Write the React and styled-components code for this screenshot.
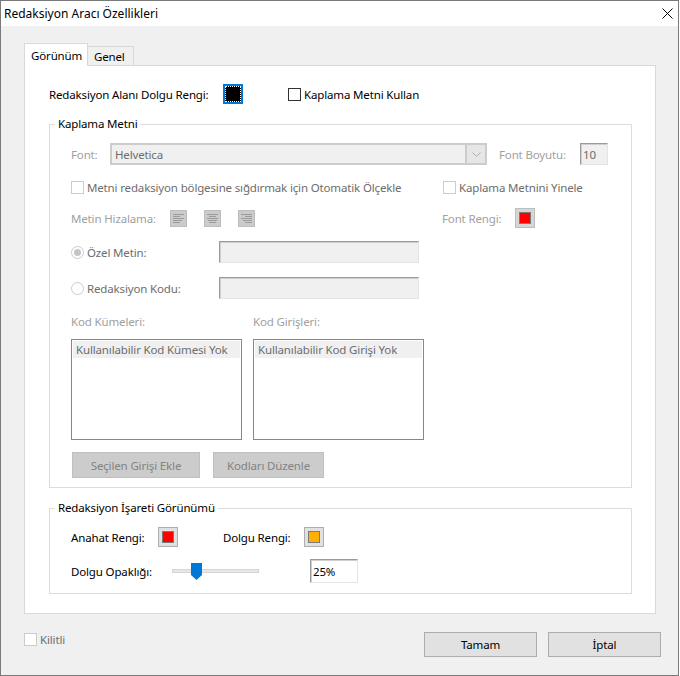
import React from "react";
import styled, { createGlobalStyle } from "styled-components";

const FONT = `"Segoe UI", "Noto Sans", "Open Sans", sans-serif`;

const Global = createGlobalStyle`
  html, body { margin: 0; padding: 0; background: #ffffff; }
  body { font-family: ${FONT}; font-size: 11.5px; letter-spacing: -0.15px; color: #000; }
  * { box-sizing: border-box; }
`;

const TONES = { on: "#000000", mid: "#6d6d6d", off: "#a0a0a0", btn: "#838383" };

const Window = styled.div`
  width: 679px;
  height: 676px;
  border: 1px solid #7a7a7a;
  background: #f0f0f0;
  display: flex;
  flex-direction: column;
`;

const TitleBar = styled.div`
  height: 25px;
  flex-shrink: 0;
  background: #ffffff;
  display: flex;
  align-items: center;
  justify-content: space-between;
  padding: 0 5px 0 3px;
`;

const TitleText = styled.span`
  font-size: 12px;
  letter-spacing: 0;
`;

const TabArea = styled.div`
  margin: 17px 0 0 23px;
  width: 632px;
`;

const TabRow = styled.div`
  display: flex;
  align-items: flex-end;
  height: 22px;
`;

const Tab = styled.div`
  display: flex;
  align-items: center;
  padding-left: 6px;
  border: 1px solid #d9d9d9;
  border-bottom: 0;
  position: relative;
  width: ${(p) => p.$w}px;
  height: ${(p) => (p.$active ? 23 : 19)}px;
  margin-bottom: ${(p) => (p.$active ? -1 : 0)}px;
  margin-left: ${(p) => (p.$active ? 0 : -1)}px;
  background: ${(p) => (p.$active ? "#ffffff" : "#f0f0f0")};
  z-index: ${(p) => (p.$active ? 2 : 1)};
`;

const Panel = styled.div`
  height: 549px;
  background: #ffffff;
  border: 1px solid #d9d9d9;
  padding: 18px 23px 0 24px;
`;

const Row = styled.div`
  display: flex;
  align-items: center;
  height: ${(p) => p.$h}px;
  margin-top: ${(p) => p.$mt || 0}px;
  gap: ${(p) => p.$gap || 0}px;
`;

const Cell = styled.div`
  display: flex;
  align-items: center;
  flex-shrink: 0;
  width: ${(p) => (p.$w ? `${p.$w}px` : "auto")};
  margin-left: ${(p) => p.$ml || 0}px;
  gap: ${(p) => p.$gap || 0}px;
`;

const Text = styled.span`
  white-space: nowrap;
  color: ${(p) => TONES[p.$tone || "on"]};
`;

const Group = styled.fieldset`
  margin: ${(p) => p.$mt}px 0 0 0;
  padding: 0;
  border: 1px solid #dcdcdc;
  min-width: 0;
`;

const Legend = styled.legend`
  margin-left: 5px;
  padding: 0 3px;
  line-height: 16px;
  color: #000;
`;

const GroupBody = styled.div`
  padding: ${(p) => p.$pad};
`;

const CheckBox = styled.span`
  width: 13px;
  height: 13px;
  flex-shrink: 0;
  background: #ffffff;
  border: 1px solid ${(p) => (p.$disabled ? "#cccccc" : "#333333")};
`;

const CheckItem = styled.label`
  display: flex;
  align-items: center;
  gap: 3px;
  margin-left: ${(p) => p.$ml || 0}px;
`;

const RadioDot = styled.span`
  width: 13px;
  height: 13px;
  flex-shrink: 0;
  border-radius: 50%;
  border: 1px solid #cccccc;
  background: #ffffff;
  display: flex;
  align-items: center;
  justify-content: center;
  &::after {
    content: "";
    width: 7px;
    height: 7px;
    border-radius: 50%;
    background: ${(p) => (p.$checked ? "#c4c4c4" : "transparent")};
  }
`;

const Combo = styled.div`
  width: ${(p) => p.$w}px;
  height: 22px;
  display: flex;
  background: #cccccc;
  padding: 2px;
  flex-shrink: 0;
`;

const ComboEdit = styled.div`
  flex: 1;
  background: #f0f0f0;
  display: flex;
  align-items: center;
  padding-left: 3px;
  color: #6d6d6d;
`;

const ComboArrow = styled.div`
  width: 18px;
  display: flex;
  align-items: center;
  justify-content: center;
  background: #e6e6e6;
  margin-left: 2px;
`;

const Field = styled.div`
  width: ${(p) => p.$w}px;
  height: ${(p) => p.$h}px;
  flex-shrink: 0;
  margin-left: ${(p) => p.$ml || 0}px;
  background: ${(p) => (p.$white ? "#ffffff" : "#f0f0f0")};
  border: 1px solid;
  border-color: #9a9a9a #e3e3e3 #e3e3e3 #9a9a9a;
  box-shadow: inset 1px 1px 0 #cfcfcf;
  display: flex;
  align-items: center;
  padding-left: 2px;
  color: ${(p) => (p.$white ? "#000" : "#6d6d6d")};
`;

const SwatchFrame = styled.div`
  width: 20px;
  height: 20px;
  flex-shrink: 0;
  background: ${(p) => (p.$disabled ? "#d6d6d6" : "#e1e1e1")};
  border: 1px solid ${(p) => (p.$disabled ? "#bdbdbd" : "#adadad")};
  display: flex;
  align-items: center;
  justify-content: center;
`;

const SwatchChip = styled.div`
  width: 12px;
  height: 12px;
  background: ${(p) => p.$color};
  border: 1px solid #7a7a7a;
`;

const FocusSwatch = styled.div`
  width: 20px;
  height: 20px;
  flex-shrink: 0;
  border: 2px solid #0078d7;
  background: #000;
  display: flex;
`;

const FocusInner = styled.div`
  flex: 1;
  border: 1px dotted #ffffff;
  background: #000;
`;

const ListBox = styled.div`
  width: 171px;
  height: 101px;
  flex-shrink: 0;
  background: #fff;
  border: 1px solid #828790;
  padding: 1px;
`;

const ListItem = styled.div`
  height: 17px;
  line-height: 17px;
  background: #f0f0f0;
  padding-left: 3px;
  color: #6d6d6d;
  white-space: nowrap;
`;

const Button = styled.div`
  width: ${(p) => p.$w}px;
  height: ${(p) => p.$h}px;
  margin-left: ${(p) => p.$ml || 0}px;
  flex-shrink: 0;
  display: flex;
  align-items: center;
  justify-content: center;
  background: ${(p) => (p.$disabled ? "#cccccc" : "#e1e1e1")};
  border: 1px solid ${(p) => (p.$disabled ? "#bfbfbf" : "#adadad")};
  color: ${(p) => (p.$disabled ? TONES.btn : "#000")};
`;

const Slider = styled.div`
  position: relative;
  width: ${(p) => p.$w}px;
  height: 17px;
  flex-shrink: 0;
  display: flex;
  align-items: center;
`;

const Track = styled.div`
  width: 100%;
  height: 4px;
  background: #e7e7e7;
  border: 1px solid #d6d6d6;
`;

const Thumb = styled.svg`
  position: absolute;
  top: 0;
`;

const BottomRow = styled.div`
  margin-top: 18px;
  padding: 0 17px 0 23px;
  display: flex;
  justify-content: space-between;
  align-items: flex-start;
`;

const ButtonGroup = styled.div`
  display: flex;
  gap: 11px;
`;

const AlignGroup = styled.div`
  display: flex;
  gap: 17px;
`;

function CloseIcon() {
  return (
    <svg width="11" height="11" viewBox="0 0 11 11">
      <path d="M0.5 0.5 L10.5 10.5 M10.5 0.5 L0.5 10.5" stroke="#000" strokeWidth="1" />
    </svg>
  );
}

function Chevron() {
  return (
    <svg width="9" height="5" viewBox="0 0 9 5">
      <path d="M0.5 0.5 L4.5 4.5 L8.5 0.5" stroke="#b0b0b0" strokeWidth="1" fill="none" />
    </svg>
  );
}

function AlignIcon({ mode }) {
  const lens = [11, 7, 11, 9, 7];
  return (
    <svg width="17" height="17" viewBox="0 0 17 17">
      <rect x="0.5" y="0.5" width="16" height="16" fill="#cbcbcb" stroke="#bdbdbd" />
      {lens.map((l, i) => {
        const x = mode === "left" ? 3 : mode === "right" ? 14 - l : (17 - l) / 2;
        return <rect key={i} x={x} y={4 + i * 2} width={l} height="1" fill="#9b9b9b" />;
      })}
    </svg>
  );
}

function Check({ label, tone = "on", disabled, ml }) {
  return (
    <CheckItem $ml={ml}>
      <CheckBox $disabled={disabled} />
      <Text $tone={tone}>{label}</Text>
    </CheckItem>
  );
}

function Radio({ label, checked }) {
  return (
    <CheckItem>
      <RadioDot $checked={checked} />
      <Text $tone="mid">{label}</Text>
    </CheckItem>
  );
}

function Swatch({ color, disabled }) {
  return (
    <SwatchFrame $disabled={disabled}>
      <SwatchChip $color={color} />
    </SwatchFrame>
  );
}

function OpacitySlider({ width, value }) {
  const left = Math.round(((width - 11) * value) / 100);
  return (
    <Slider $w={width}>
      <Track />
      <Thumb width="11" height="17" viewBox="0 0 11 17" style={{ left }}>
        <path d="M0 0 H11 V12 L5.5 17 L0 12 Z" fill="#0078d7" />
      </Thumb>
    </Slider>
  );
}

export default function App() {
  return (
    <>
      <Global />
      <Window>
        <TitleBar>
          <TitleText>Redaksiyon Aracı Özellikleri</TitleText>
          <CloseIcon />
        </TitleBar>

        <TabArea>
          <TabRow>
            <Tab $active $w={64}>Görünüm</Tab>
            <Tab $w={47}>Genel</Tab>
          </TabRow>
          <Panel>
            <Row $h={20}>
              <Cell $w={174}>
                <Text>Redaksiyon Alanı Dolgu Rengi:</Text>
              </Cell>
              <FocusSwatch>
                <FocusInner />
              </FocusSwatch>
              <Check label="Kaplama Metni Kullan" ml={45} />
            </Row>

            <Group $mt={12}>
              <Legend>Kaplama Metni</Legend>
              <GroupBody $pad="11px 20px 9px 21px">
                <Row $h={22}>
                  <Cell $w={39}>
                    <Text $tone="off">Font:</Text>
                  </Cell>
                  <Combo $w={377}>
                    <ComboEdit>Helvetica</ComboEdit>
                    <ComboArrow>
                      <Chevron />
                    </ComboArrow>
                  </Combo>
                  <Cell $w={81} $ml={12}>
                    <Text $tone="off">Font Boyutu:</Text>
                  </Cell>
                  <Field $w={28} $h={22}>10</Field>
                </Row>

                <Row $h={20} $mt={12}>
                  <Cell $w={372}>
                    <Check disabled tone="mid" label="Metni redaksiyon bölgesine sığdırmak için Otomatik Ölçekle" />
                  </Cell>
                  <Check disabled tone="mid" label="Kaplama Metnini Yinele" />
                </Row>

                <Row $h={20} $mt={11}>
                  <Cell $w={371}>
                    <Cell $w={99}>
                      <Text $tone="off">Metin Hizalama:</Text>
                    </Cell>
                    <AlignGroup>
                      <AlignIcon mode="left" />
                      <AlignIcon mode="center" />
                      <AlignIcon mode="right" />
                    </AlignGroup>
                  </Cell>
                  <Cell $w={73}>
                    <Text $tone="off">Font Rengi:</Text>
                  </Cell>
                  <Swatch color="#ff0000" disabled />
                </Row>

                <Row $h={22} $mt={13}>
                  <Cell $w={148}>
                    <Radio checked label="Özel Metin:" />
                  </Cell>
                  <Field $w={200} $h={22} />
                </Row>

                <Row $h={22} $mt={14}>
                  <Cell $w={148}>
                    <Radio label="Redaksiyon Kodu:" />
                  </Cell>
                  <Field $w={200} $h={22} />
                </Row>

                <Row $h={16} $mt={14}>
                  <Cell $w={182}>
                    <Text $tone="off">Kod Kümeleri:</Text>
                  </Cell>
                  <Text $tone="off">Kod Girişleri:</Text>
                </Row>

                <Row $h={101} $mt={10} $gap={11}>
                  <ListBox>
                    <ListItem>Kullanılabilir Kod Kümesi Yok</ListItem>
                  </ListBox>
                  <ListBox>
                    <ListItem>Kullanılabilir Kod Girişi Yok</ListItem>
                  </ListBox>
                </Row>

                <Row $h={26} $mt={12}>
                  <Button $disabled $w={128} $h={26} $ml={1}>Seçilen Girişi Ekle</Button>
                  <Button $disabled $w={111} $h={26} $ml={13}>Kodları Düzenle</Button>
                </Row>
              </GroupBody>
            </Group>

            <Group $mt={12}>
              <Legend>Redaksiyon İşareti Görünümü</Legend>
              <GroupBody $pad="11px 20px 10px 21px">
                <Row $h={20}>
                  <Cell $w={87}>
                    <Text>Anahat Rengi:</Text>
                  </Cell>
                  <Swatch color="#ff0000" />
                  <Cell $w={81} $ml={45}>
                    <Text>Dolgu Rengi:</Text>
                  </Cell>
                  <Swatch color="#ffb000" />
                </Row>
                <Row $h={24} $mt={12}>
                  <Cell $w={101}>
                    <Text>Dolgu Opaklığı:</Text>
                  </Cell>
                  <OpacitySlider width={87} value={25} />
                  <Field $white $w={48} $h={24} $ml={51}>25%</Field>
                </Row>
              </GroupBody>
            </Group>
          </Panel>
        </TabArea>

        <BottomRow>
          <Check disabled tone="mid" label="Kilitli" />
          <ButtonGroup>
            <Button $w={113} $h={25}>Tamam</Button>
            <Button $w={113} $h={25}>İptal</Button>
          </ButtonGroup>
        </BottomRow>
      </Window>
    </>
  );
}
